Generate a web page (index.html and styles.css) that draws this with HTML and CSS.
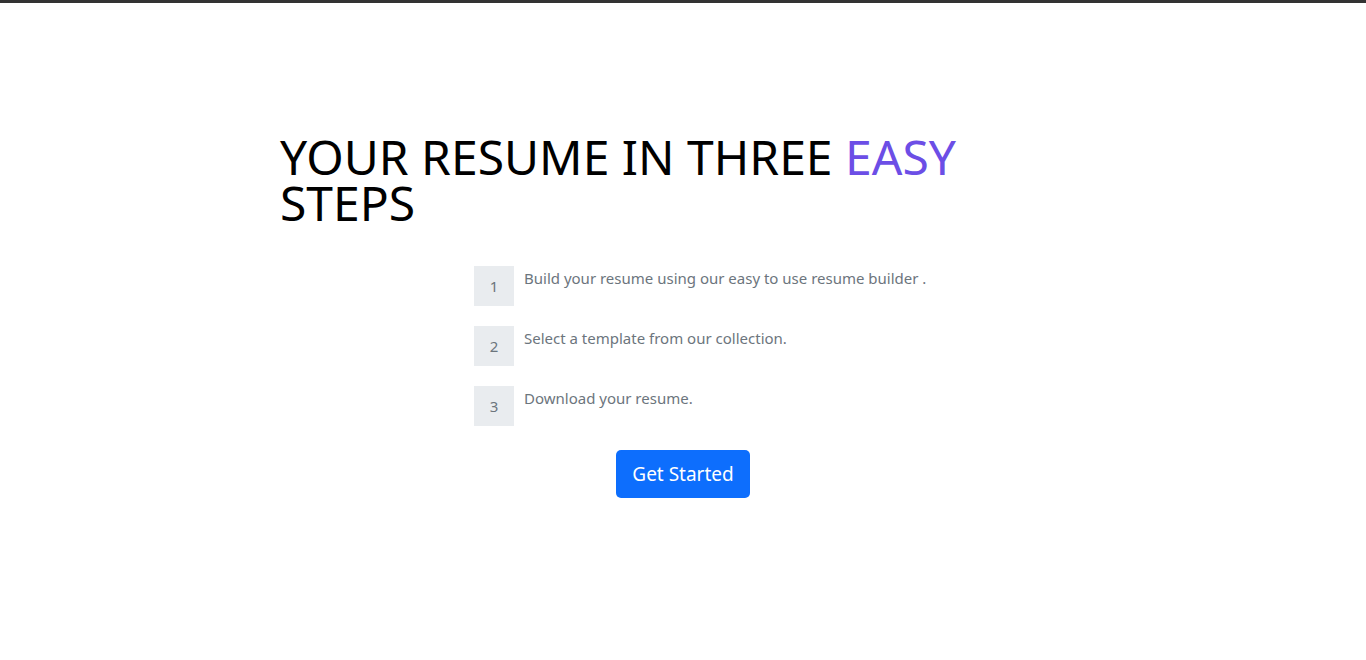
FILE: index.html
```html
<!DOCTYPE html>
<html lang="en">
<head>
<meta charset="utf-8">
<title>Your resume in three easy steps</title>
<link rel="stylesheet" href="styles.css">
</head>
<body>
<div class="topbar"></div>
<main class="hero">
  <h1 class="title">YOUR RESUME IN THREE <span class="accent">EASY</span><br>STEPS</h1>
  <ol class="steps">
    <li class="step"><span class="num">1</span><p class="text">Build your resume using our easy to use resume builder .</p></li>
    <li class="step"><span class="num">2</span><p class="text">Select a template from our collection.</p></li>
    <li class="step"><span class="num">3</span><p class="text">Download your resume.</p></li>
  </ol>
  <div class="actions"><a class="btn" href="#">Get Started</a></div>
</main>
</body>
</html>
```
FILE: styles.css
```css
* { box-sizing: border-box; }
html, body { margin: 0; padding: 0; background: #fff; }
body { font-family: "Noto Sans", "Open Sans", sans-serif; color: #212529; }
.topbar { height: 3px; background: #333; }
.hero { width: 806px; margin: 0 auto; padding-top: 131px; }
.title {
  margin: 0;
  font-weight: 400;
  font-size: 48px;
  line-height: 46px;
  color: #000;
}
.accent { color: #6c4ee6; }
.steps { list-style: none; margin: 40px 0 0 194px; padding: 0; display: flex; flex-direction: column; gap: 20px; }
.step { display: flex; align-items: flex-start; gap: 10px; }
.num {
  width: 40px; height: 40px; flex: none;
  display: flex; align-items: center; justify-content: center;
  background: #e9ecef; color: #6c757d; font-size: 15px;
}
.text { margin: 1px 0 0; font-size: 15px; line-height: 22px; color: #6c757d; }
.actions { display: flex; justify-content: center; margin-top: 24px; }
.btn {
  display: inline-block; padding: 0 16px; height: 48px; line-height: 48px;
  background: #0d6efd; color: #fff; text-decoration: none;
  font-size: 19px; border-radius: 5px;
}
```
